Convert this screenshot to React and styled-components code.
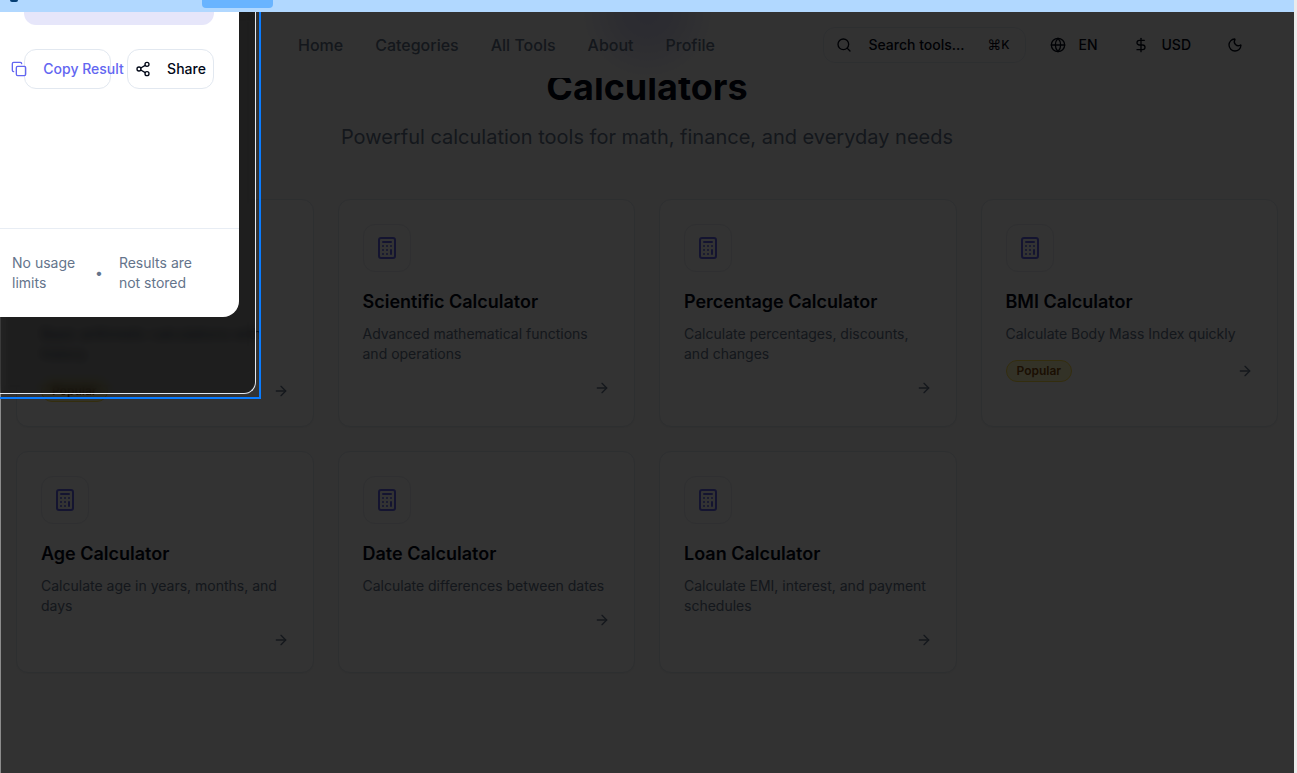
import React from "react";
import styled, { createGlobalStyle } from "styled-components";
import {
  ArrowRight,
  Calculator,
  Copy,
  DollarSign,
  Globe,
  Moon,
  Search,
  Share2,
} from "lucide-react";

const GlobalStyle = createGlobalStyle`
  *, *::before, *::after { box-sizing: border-box; }
  body {
    margin: 0;
    background: #ebebeb;
    color: #020817;
    font-family: Inter, "Liberation Sans", sans-serif;
    font-size: 14px;
    line-height: 20px;
  }
  h1, h2, p { margin: 0; }
  a { color: inherit; text-decoration: none; }
  button { font: inherit; color: inherit; cursor: pointer; }
`;

const Shell = styled.div`
  display: flex;
  flex-direction: column;
  min-height: 100vh;
  margin-right: 3px;
`;

const Banner = styled.div`
  display: flex;
  align-items: flex-start;
  height: 12px;
  padding-left: 10px;
  overflow: hidden;
  background: #b1d8ff;
`;

const BannerIcon = styled.span`
  width: 8px;
  height: 2px;
  border-radius: 0 0 4px 4px;
  background: #063f75;
`;

const BannerButton = styled.button`
  width: 71px;
  height: 8px;
  margin-left: 184px;
  padding: 0;
  border: 0;
  border-radius: 0 0 4px 4px;
  background: #69b4ff;
`;

const Page = styled.div`
  position: relative;
  flex: 1;
  border-left: 1px solid #8c8c8c;
  background: #fafafa;
`;

const Header = styled.header`
  position: relative;
  z-index: 1;
  display: flex;
  align-items: center;
  justify-content: space-between;
  height: 66px;
  padding: 0 39px 0 297px;
  background: radial-gradient(circle 68px at 50% 0, #d4d4f6, #dedef4 40%, #fafafa) #fafafa;
`;

const Nav = styled.nav`
  display: flex;
  gap: 32px;
  color: #64748b;
  font-size: 16px;
  font-weight: 500;
  line-height: 24px;
`;

const Tools = styled.div`
  display: flex;
  align-items: center;
  gap: 12px;
`;

const ToolButton = styled.button`
  display: flex;
  align-items: center;
  justify-content: center;
  gap: 12px;
  min-width: 40px;
  height: 36px;
  padding: 0 12px;
  border: 0;
  border-radius: 12px;
  background: transparent;
  font-weight: 500;
`;

const SearchButton = styled(ToolButton)`
  justify-content: flex-start;
  gap: 16px;
  width: 203px;
  border: 1px solid #e2e8f0;
`;

const Shortcut = styled.kbd`
  display: flex;
  align-items: center;
  margin-left: auto;
  padding-right: 4px;
  font-family: Inter, "Liberation Sans", sans-serif;
  font-size: 12px;
`;

const CommandKey = styled.span`
  font-family: "DejaVu Sans", sans-serif;
  font-size: 14px;
  font-weight: 400;
`;

const Main = styled.main`
  margin-top: -11px;
  padding: 0 16px 100px 15px;
`;

const Hero = styled.div`
  display: flex;
  flex-direction: column;
  gap: 16px;
  margin-bottom: 48px;
  text-align: center;
`;

const Heading = styled.h1`
  font-size: 36px;
  font-weight: 700;
  line-height: 40px;
`;

const Lead = styled.p`
  color: #64748b;
  font-size: 20px;
  line-height: 28px;
`;

const Grid = styled.div`
  display: grid;
  grid-template-columns: repeat(4, 1fr);
  gap: 24px;
`;

const Card = styled.a`
  display: flex;
  flex-direction: column;
  padding: 24px;
  border: 1px solid #e2e8f0;
  border-radius: 12px;
  background: #fcfcfc;
  box-shadow: 0 1px 2px rgba(0, 0, 0, 0.05);
`;

const IconBox = styled.span`
  display: flex;
  align-items: center;
  justify-content: center;
  width: 48px;
  height: 48px;
  margin-bottom: 16px;
  border: 1px solid #e8ebf2;
  border-radius: 12px;
  color: #6366f1;
`;

const CardTitle = styled.h2`
  margin-bottom: 8px;
  font-size: 18px;
  font-weight: 600;
  line-height: 28px;
`;

const CardText = styled.p`
  margin-bottom: 16px;
  color: #64748b;
`;

const CardFoot = styled.div`
  display: flex;
  align-items: center;
  color: #64748b;

  svg { margin-left: auto; }
`;

const Badge = styled.span`
  padding: 2px 10px;
  border: 1px solid #fde047;
  border-radius: 12px;
  background: #fef9c3;
  color: #854d0e;
  font-size: 12px;
  font-weight: 600;
  line-height: 16px;
`;

const Overlay = styled.div`
  position: absolute;
  inset: 0;
  z-index: 2;
  background: rgba(0, 0, 0, 0.8);
`;

const Selection = styled.div`
  position: absolute;
  top: 0;
  left: -1px;
  z-index: 3;
  padding: 0 3px 3px 0;
  border: solid #0a7cff;
  border-width: 0 2px 2px 0;
`;

const Dialog = styled.section`
  width: 256px;
  padding: 0 16px 76px 0;
  border: solid #e2e8f0;
  border-width: 0 1px 1px 0;
  border-radius: 0 0 12px 0;
  background: rgba(0, 0, 0, 0.4);
  backdrop-filter: blur(4px);
`;

const Panel = styled.div`
  border-radius: 0 0 16px 0;
  background: #ffffff;
`;

const PanelBody = styled.div`
  display: flex;
  flex-direction: column;
  gap: 24px;
  min-height: 216px;
  padding: 0 25px 0 24px;
`;

const Result = styled.div`
  height: 13px;
  border-radius: 0 0 12px 12px;
  background: #e6e6fa;
`;

const Actions = styled.div`
  display: grid;
  grid-template-columns: 1fr 1fr;
  gap: 16px;
`;

const ActionButton = styled.button`
  display: flex;
  align-items: center;
  justify-content: center;
  gap: 16px;
  min-width: 0;
  height: 40px;
  padding: 0;
  border: 1px solid #e2e8f0;
  border-radius: 12px;
  background: transparent;
  color: ${({ $accent }) => ($accent ? "#6366f1" : "#020817")};
  font-weight: 500;
  white-space: nowrap;

  svg { flex: none; }
`;

const PanelFoot = styled.footer`
  display: flex;
  align-items: center;
  gap: 16px;
  padding: 24px 24px 24px 12px;
  border-top: 1px solid #e8edf4;
  color: #64748b;
`;

const Note = styled.span`
  width: ${({ $wide }) => ($wide ? 80 : 67)}px;
`;

const links = ["Home", "Categories", "All Tools", "About", "Profile"];

const cards = [
  { title: "Basic Calculator", text: "Basic arithmetic calculations with history", popular: true },
  { title: "Scientific Calculator", text: "Advanced mathematical functions and operations" },
  { title: "Percentage Calculator", text: "Calculate percentages, discounts, and changes" },
  { title: "BMI Calculator", text: "Calculate Body Mass Index quickly", popular: true },
  { title: "Age Calculator", text: "Calculate age in years, months, and days" },
  { title: "Date Calculator", text: "Calculate differences between dates" },
  { title: "Loan Calculator", text: "Calculate EMI, interest, and payment schedules" },
];

export default function App() {
  return (
    <>
      <GlobalStyle />
      <Shell>
        <Banner>
          <BannerIcon />
          <BannerButton aria-label="Banner action" />
        </Banner>
        <Page>
          <Header>
            <Nav>
              {links.map((link) => (
                <a key={link} href="#">{link}</a>
              ))}
            </Nav>
            <Tools>
              <SearchButton>
                <Search size={16} />
                Search tools...
                <Shortcut><CommandKey>⌘</CommandKey>K</Shortcut>
              </SearchButton>
              <ToolButton><Globe size={16} />EN</ToolButton>
              <ToolButton><DollarSign size={16} />USD</ToolButton>
              <ToolButton aria-label="Toggle theme"><Moon size={16} /></ToolButton>
            </Tools>
          </Header>
          <Main>
            <Hero>
              <Heading>Calculators</Heading>
              <Lead>Powerful calculation tools for math, finance, and everyday needs</Lead>
            </Hero>
            <Grid>
              {cards.map(({ title, text, popular }) => (
                <Card key={title} href="#">
                  <IconBox><Calculator size={24} /></IconBox>
                  <CardTitle>{title}</CardTitle>
                  <CardText>{text}</CardText>
                  <CardFoot>
                    {popular && <Badge>Popular</Badge>}
                    <ArrowRight size={16} />
                  </CardFoot>
                </Card>
              ))}
            </Grid>
          </Main>
          <Overlay />
          <Selection>
            <Dialog role="dialog" aria-label="Calculator">
              <Panel>
                <PanelBody>
                  <Result />
                  <Actions>
                    <ActionButton $accent><Copy size={16} />Copy Result</ActionButton>
                    <ActionButton><Share2 size={16} />Share</ActionButton>
                  </Actions>
                </PanelBody>
                <PanelFoot>
                  <Note>No usage limits</Note>
                  <span>•</span>
                  <Note $wide>Results are not stored</Note>
                </PanelFoot>
              </Panel>
            </Dialog>
          </Selection>
        </Page>
      </Shell>
    </>
  );
}
